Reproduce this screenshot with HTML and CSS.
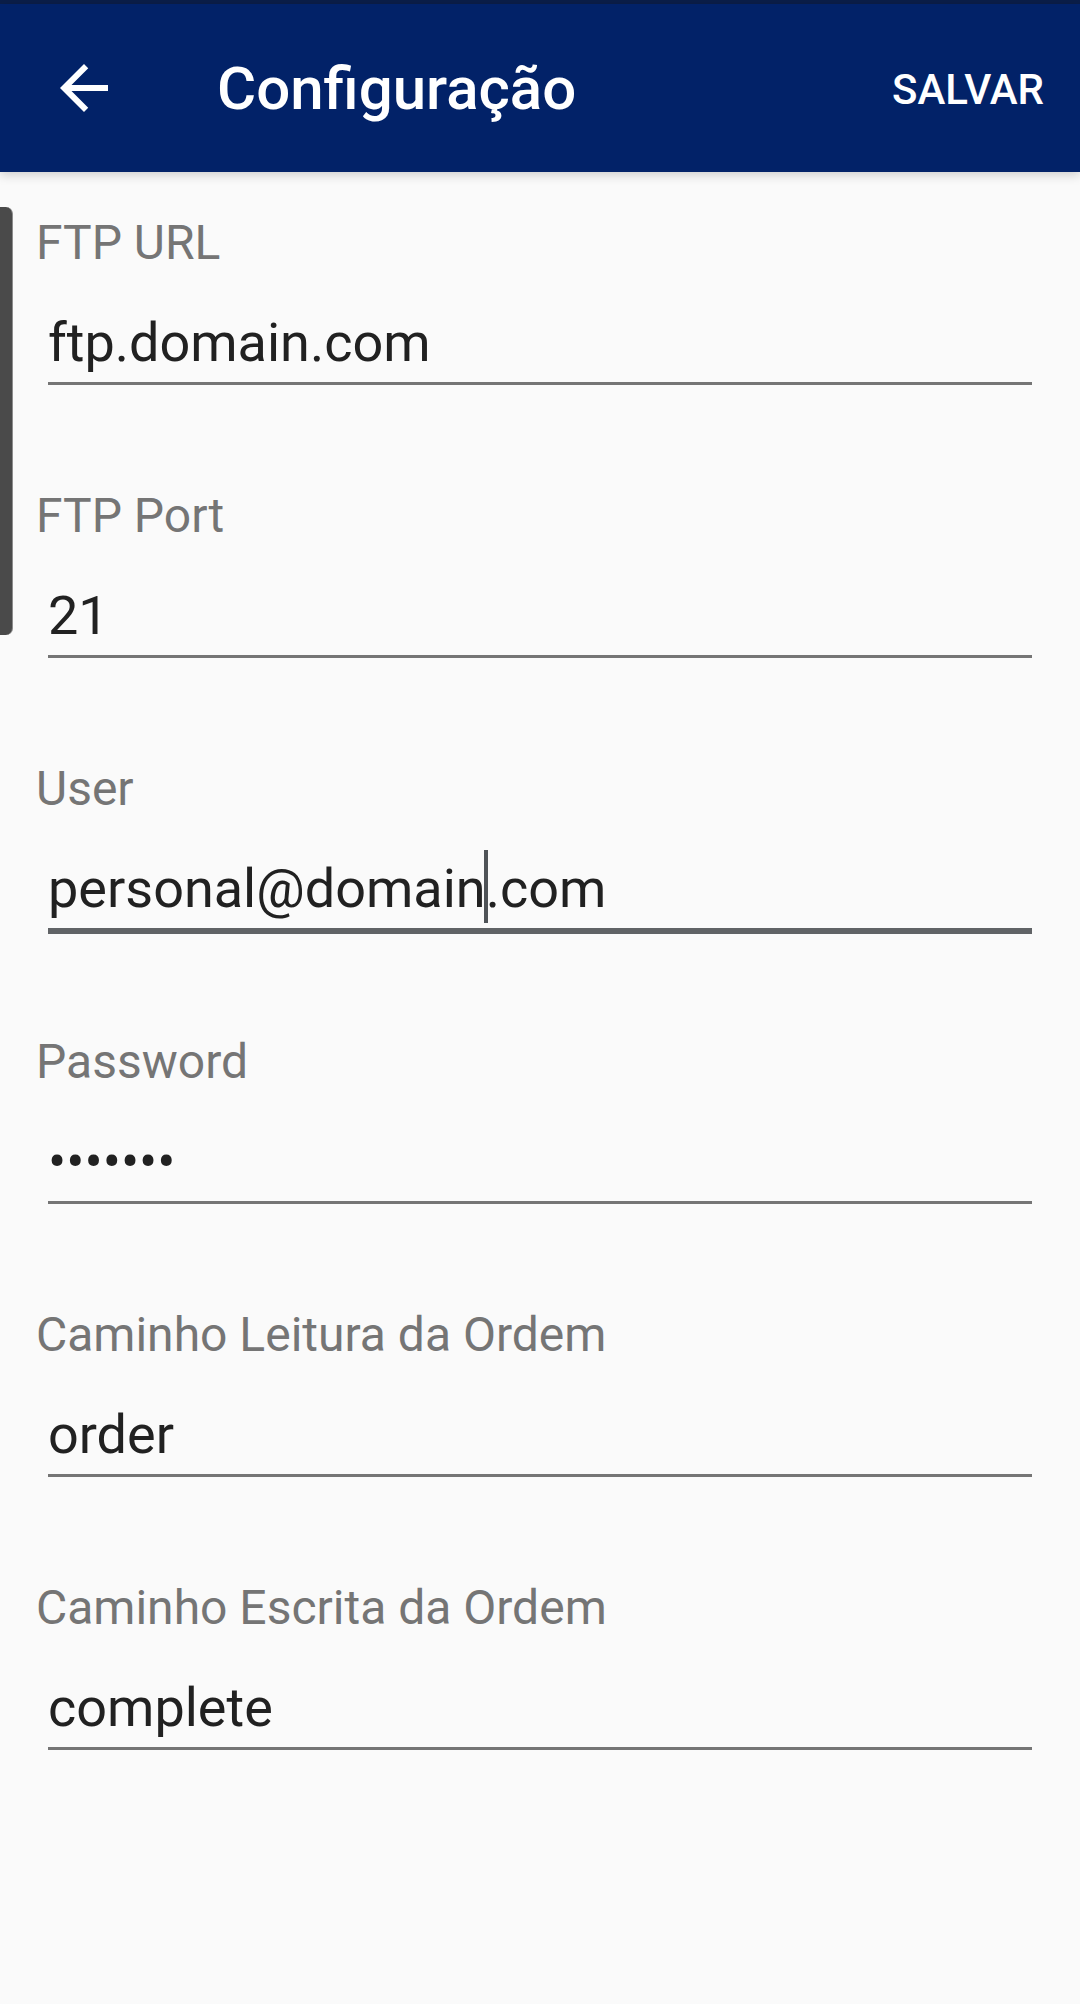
FILE: index.html
```html
<!DOCTYPE html>
<html lang="pt">
<head>
    <meta charset="UTF-8">
    <meta name="viewport" content="width=device-width, initial-scale=1.0">
    <title>Configuração</title>
    <link rel="stylesheet" href="styles.css">
</head>
<body>
    <div class="status-bar"></div>
    <header class="toolbar">
        <button class="back" type="button" aria-label="Voltar">
            <svg viewBox="0 0 24 24" width="72" height="72">
                <path d="M20 11H7.83l5.59-5.59L12 4l-8 8 8 8 1.41-1.41L7.83 13H20v-2z" fill="#fff"/>
            </svg>
        </button>
        <h1 class="title">Configuração</h1>
        <button class="save" type="button">Salvar</button>
    </header>

    <main class="form">
        <div class="scroll-thumb"></div>

        <div class="field">
            <div class="label">FTP URL</div>
            <div class="input">ftp.domain.com</div>
        </div>

        <div class="field">
            <div class="label">FTP Port</div>
            <div class="input">21</div>
        </div>

        <div class="field">
            <div class="label">User</div>
            <div class="input focused">personal@domain<span class="caret"></span>.com</div>
        </div>

        <div class="field">
            <div class="label">Password</div>
            <div class="input">•••••••</div>
        </div>

        <div class="field">
            <div class="label">Caminho Leitura da Ordem</div>
            <div class="input">order</div>
        </div>

        <div class="field">
            <div class="label">Caminho Escrita da Ordem</div>
            <div class="input">complete</div>
        </div>
    </main>
</body>
</html>
```

FILE: styles.css
```css
body {
    margin: 0;
    padding: 0;
    font-family: Roboto, "Liberation Sans", Arial, sans-serif;
    background-color: #fafafa;
    height: 2004px;
    overflow: hidden;
}
.status-bar {
    height: 4px;
    background-color: #0b1e49;
}
.toolbar {
    height: 168px;
    background-color: #022268;
    display: flex;
    align-items: center;
    padding-left: 48px;
    padding-right: 36px;
    box-shadow: 0 3px 10px rgba(0, 0, 0, 0.18);
    position: relative;
    z-index: 1;
}
.back {
    width: 72px;
    height: 72px;
    padding: 0;
    border: none;
    background: none;
    display: flex;
}
.title {
    margin: 0 0 0 97px;
    padding-top: 2px;
    font-size: 60px;
    font-weight: 500;
    line-height: 70px;
    color: #fff;
}
.save {
    margin-left: auto;
    padding: 3px 0 0;
    border: none;
    background: none;
    color: #fff;
    font-family: inherit;
    font-size: 42px;
    font-weight: 500;
    letter-spacing: 0;
    text-transform: uppercase;
    line-height: 50px;
}
.form {
    position: relative;
    padding: 43px 36px 0;
}
.scroll-thumb {
    position: absolute;
    left: 0;
    top: 35px;
    width: 12px;
    height: 428px;
    background-color: #4a4a4a;
    border-right: 1px solid #8c8c8c;
    border-radius: 0 7px 7px 0;
}
.field {
    display: flex;
    flex-direction: column;
    margin-bottom: 103px;
}
.label {
    font-size: 48px;
    line-height: 56px;
    color: #757575;
}
.input {
    margin: 40px 12px 0;
    padding-bottom: 8px;
    font-size: 54px;
    line-height: 63px;
    color: #212121;
    border-bottom: 3px solid #757575;
    white-space: nowrap;
}
.input.focused {
    border-bottom: 6px solid #606366;
    margin-bottom: -3px;
}
.caret {
    display: inline-block;
    width: 4px;
    height: 73px;
    margin: -7px -2px -4px;
    vertical-align: top;
    background-color: #4f5357;
}
```
